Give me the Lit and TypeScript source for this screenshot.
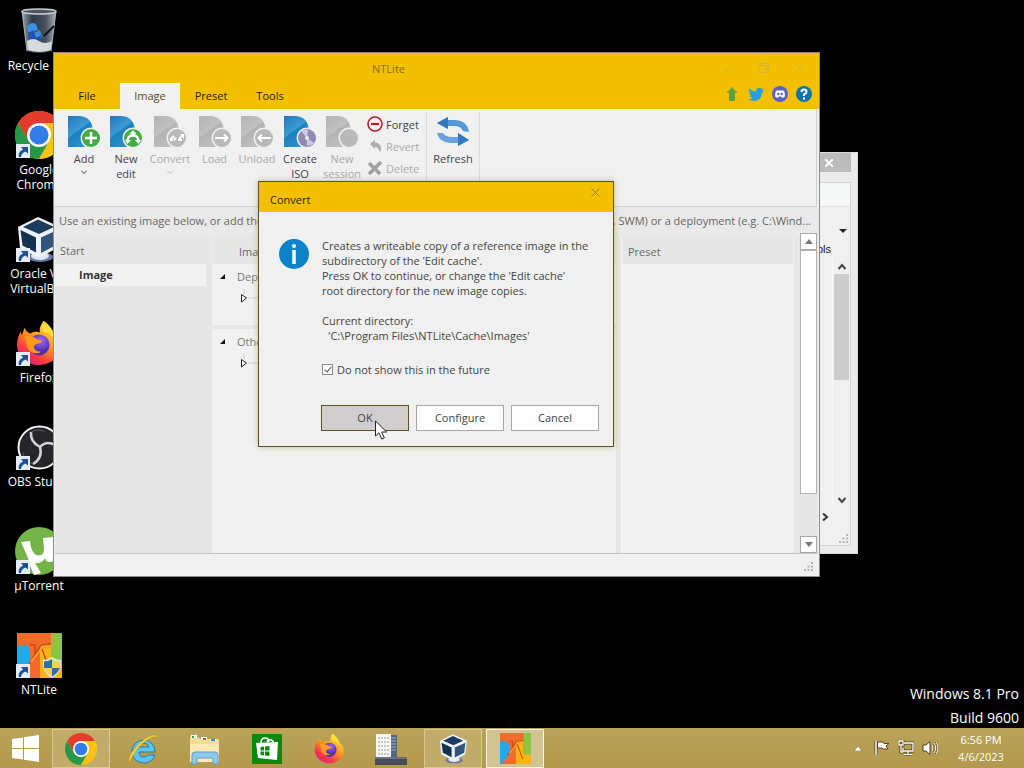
import { LitElement, html, svg, css, nothing, TemplateResult } from "lit";
import { customElement, state } from "lit/decorators.js";
import { classMap } from "lit/directives/class-map.js";

const chrome = (size: number) => html`<svg width=${size} height=${size} viewBox="0 0 48 48" aria-hidden="true">
  <circle cx="24" cy="24" r="24" fill="#fbc116"/>
  <path d="M3.2 12A24 24 0 0 1 44.8 12L24 13 13.6 30Z" fill="#e33b2e"/>
  <path d="M3.2 12A24 24 0 0 0 24 48L34.4 30 24 35 13.6 30Z" fill="#279847"/>
  <path d="M44.8 12A24 24 0 0 1 24 48L34.4 30 33 16 24 12Z" fill="#fbc116"/>
  <circle cx="24" cy="24" r="12" fill="#fff"/><circle cx="24" cy="24" r="9.5" fill="#2f7de9"/></svg>`;

const firefox = (size: number) => html`<svg width=${size} height=${size} viewBox="0 0 48 48" aria-hidden="true">
  <defs>
    <linearGradient id="ff1" x1="0.8" y1="0.1" x2="0.2" y2="1"><stop offset="0" stop-color="#ffe23a"/><stop offset="0.45" stop-color="#ff8a1d"/><stop offset="0.75" stop-color="#f8354a"/><stop offset="1" stop-color="#e31587"/></linearGradient>
    <radialGradient id="ff2" cx="0.6" cy="0.3"><stop offset="0" stop-color="#a06bf5"/><stop offset="1" stop-color="#4b2fb0"/></radialGradient>
  </defs>
  <path d="M29 1C36 6 39 11 40 16 43 17 46 22 46 28 46 39 36 47 24 47S1 38 1 26C1 20 3 15 5 12L6 16 9 8C10 11 12 13 15 14 19 12 22 12 25 13 24 9 26 4 29 1Z" fill="url(#ff1)"/>
  <circle cx="24" cy="26" r="11" fill="url(#ff2)"/>
  <path d="M9 17C14 16 19 17 22 20 25 21 27 21 27 22 26 25 21 24 19 27 18 30 21 33 26 33 20 37 11 33 11 25Z" fill="#ff9a1f"/>
  <path d="M29 1C36 8 40 13 40 20 38 16 35 14 31 13 27 11 26 6 29 1Z" fill="#ffdf3c"/></svg>`;

const vbox = (size: number) => html`<svg width=${size} height=${size} viewBox="0 0 48 48" aria-hidden="true">
  <ellipse cx="25" cy="42" rx="13" ry="5" fill="#6c74a2"/><ellipse cx="25" cy="41" rx="9" ry="4" fill="#dfe5f2"/>
  <path d="M23 2 45 12 42 33 24 43 5 33 3 12Z" fill="#eef3fa"/>
  <path d="M23 4.500 39 12 24 19 8 12Z" fill="#1d3b5d"/>
  <path d="M5.500 15 21 22.500 21 37.500 7.500 30.500Z" fill="#16304f"/>
  <path d="M42.500 15 26 22.500 26 38 40.500 30.500Z" fill="#31557d"/></svg>`;

const ntlite = (size: number, shield: boolean) => html`<svg width=${size} height=${size} viewBox="0 0 45 45" aria-hidden="true">
  <rect width="45" height="45" fill="#f26a2c"/><rect x="34" width="11" height="45" fill="#8cc444"/>
  <path d="M0 12H7Q13 12 13 20V31L3 45H0Z" fill="#22a9e6"/>
  <path d="M23 11H34V31H45V45H23Z" fill="#fbb512"/>
  <path d="M11 33 24 12 34 11 M13 12H18V26 M25 16 33 38" fill="none" stroke="#c94a12" stroke-width="1.500"/>
  <path d="M14 29 25 15 34 14" fill="none" stroke="#ff9a3a" stroke-width="2"/>
  ${shield ? svg`<path d="M35 24C38 26 41 27 44 27 45 36 41 42 35 45 29 42 25 36 26 27 29 27 32 26 35 24Z" fill="#dfe6ea"/>
    <path d="M35 26V35H27Q27 31 27 28.500 32 28 35 26Z M35 35H43Q41 40 35 43.500Z" fill="#2c6ea8"/>
    <path d="M35 26V35H43Q43.500 31 43 28.500 38 28 35 26Z M35 35H27Q29 40 35 43.500Z" fill="#f0d152"/>` : nothing}</svg>`;

const recycleBin = html`<svg width="36" height="46" viewBox="0 0 36 46" aria-hidden="true">
  <defs><linearGradient id="bin" x1="0" x2="1"><stop offset="0" stop-color="#9aa3aa"/><stop offset="0.3" stop-color="#2c3a4a"/><stop offset="0.7" stop-color="#48525e"/><stop offset="1" stop-color="#a8b0b6"/></linearGradient></defs>
  <path d="M1 3H35L30 43Q18 47 6 43Z" fill="url(#bin)"/><path d="M1 3 6 43" stroke="#aeb6bc"/><path d="M35 3 30 43" stroke="#aeb6bc"/>
  <path d="M6 19Q10 13 15 16L17 22 12 24 7 24ZM13 25 19 22 21 29 14 32Z" fill="#3d8ee0"/>
  <path d="M7 26 12 22 16 31 9 33ZM15 30 20 27 20 33Z" fill="#1e50b8"/><path d="M23 28 33 18" stroke="#0d141b" stroke-width="2"/>
  <path d="M6 33Q12 29 18 33T31 33L29.500 42Q18 46 6.500 42Z" fill="#d7dadc"/>
  <ellipse cx="18" cy="3.500" rx="17" ry="2.500" fill="#4d565f" stroke="#c6ccd1" stroke-width="1.500"/></svg>`;

const obs = html`<svg width="45" height="45" viewBox="0 0 45 45" aria-hidden="true">
  <circle cx="22.500" cy="22.500" r="21" fill="#26252a" stroke="#f1f1f1" stroke-width="2"/>
  <g fill="none" stroke="#d3d1d6" stroke-width="2.500">
    <path d="M23 22Q13 17 14 7"/><path d="M23 22Q29 15 38 20"/><path d="M23 22Q26 33 16 39"/></g>
  <g fill="none" stroke="#5b585f"><path d="M14 7Q22 3 28 7"/><path d="M38 20Q41 28 36 34"/><path d="M16 39Q8 36 6 28"/></g></svg>`;

const utorrent = html`<svg width="48" height="48" viewBox="0 0 48 48" aria-hidden="true">
  <circle cx="24" cy="24" r="24" fill="#73b348"/>
  <path d="M6 15 15 14Q16 25 21 28 29 30 29 22L28 11 38 10Q37 21 42 26L44 30Q40 35 34 35 31 35 30 31 27 37 20 36L26 46 19 48Q15 40 13 31Z" fill="#fff"/></svg>`;

const shortcut = html`<svg class="shortcut" width="14" height="14" viewBox="0 0 14 14" aria-hidden="true">
  <rect width="14" height="14" fill="#e3ecf6"/><path d="M3 13Q1.500 8 7 5.500L5 3H12V9.500L9.500 7.500Q5 9 5 13Z" fill="#1f4f96"/></svg>`;

type Badge = "plus" | "tree" | "link" | "right" | "left" | "disc" | "blank";
const badges: Record<Badge, TemplateResult> = {
  plus: svg`<path d="M23 17V29M17 23H29" stroke="#fff" stroke-width="2.500"/>`,
  tree: svg`<path d="M23 17V22M23 20Q17.500 21 17.500 26M23 20Q28.500 21 28.500 26" fill="none" stroke="#fff" stroke-width="2.500"/><path d="M19.500 19 23 15 26.500 19ZM15 25H21L17.500 29ZM25 25H31L28.500 29Z" fill="#fff"/>`,
  link: svg`<path d="M17 24 20 21M20 25 22 23M25 24 29 20M24 25 28 25" stroke="#fff" stroke-width="2"/><path d="M16 22V26H20ZM30 24V19H26Z" fill="#fff"/>`,
  right: svg`<path d="M16 23H28M25 19.500 28.500 23 25 26.500" fill="none" stroke="#fff" stroke-width="2"/>`,
  left: svg`<path d="M30 23H18M21 19.500 17.500 23 21 26.500" fill="none" stroke="#fff" stroke-width="2"/>`,
  disc: svg`<path d="M23 23 17 16Q20 14 24 15ZM23 23 30 28Q27 31 23 31Z" fill="#cfc9e8"/><circle cx="23" cy="23" r="2" fill="#eee"/>`,
  blank: svg``,
};
const discIcon = (badge: Badge, enabled: boolean) => {
  const fill = badge === "disc" ? "#8e8ab2" : enabled ? "#43ad43" : "#b9b9b9";
  const tones = enabled ? ["#2378bb", "#3b9bd3", "#1c80bf", "#2a94cf"] : ["#b4b4b4", "#c0c0c0", "#b4b4b4", "#c0c0c0"];
  const id = enabled ? "tone-on" : "tone-off";
  return html`<svg width="32" height="32" viewBox="0 0 32 32" aria-hidden="true">
    <defs><linearGradient id=${id} x1="0" y1="0" x2="0.6" y2="1"><stop offset="0" stop-color=${tones[0]}/><stop offset="0.5" stop-color=${tones[1]}/><stop offset="0.55" stop-color=${tones[2]}/><stop offset="1" stop-color=${tones[3]}/></linearGradient></defs>
    <path d="M0 1H12Q25 2 25 18V32H0Z" fill="url(#${id})"/>
    <circle cx="23" cy="23" r="10.500" fill="#efefef"/><circle cx="23" cy="23" r="9" fill=${fill}/>${badges[badge]}</svg>`;
};

const forgetIcon = html`<svg width="16" height="16" viewBox="0 0 16 16" aria-hidden="true"><circle cx="8" cy="8" r="7" fill="#fbf4f4" stroke="#bd1a26" stroke-width="1.600"/><path d="M4 8H12" stroke="#bd1a26" stroke-width="2.200"/></svg>`;
const revertIcon = html`<svg width="16" height="16" viewBox="0 0 16 16" aria-hidden="true"><path d="M3 6 8 2V4.500Q14 5 14 11L13 15Q12 9 8 9V11Z" fill="#adadad"/></svg>`;
const deleteIcon = html`<svg width="16" height="16" viewBox="0 0 16 16" aria-hidden="true"><path d="M2 3 13 14M14 2 2 14" stroke="#a2a2a2" stroke-width="3.500"/></svg>`;
const refreshIcon = html`<svg width="34" height="32" viewBox="0 0 34 32" aria-hidden="true">
  <path d="M1 8 12 2V5H18Q31 5 33 17L27 16Q25 11 18 11H12V14Z" fill="#5597d8"/><path d="M1 8 12 2V14Z" fill="#3279be"/>
  <path d="M33 25 22 31V28H14Q3 27 1 18L7 18Q9 22 16 22H22V18Z" fill="#66a3df"/><path d="M33 25 22 18V31Z" fill="#3279be"/></svg>`;

const grip = html`<svg width="9" height="9" viewBox="0 0 9 9" aria-hidden="true"><path d="M0 7h2v2H0zM3.500 7h2v2h-2zM7 7h2v2H7zM3.500 3.500h2v2h-2zM7 3.500h2v2H7zM7 0h2v2H7z" fill="#b5b5b5"/></svg>`;

interface RibbonItem { label: string; lines: string[]; badge: Badge; enabled: boolean; menu?: boolean; }
const ribbon: RibbonItem[] = [
  { label: "Add", lines: ["Add"], badge: "plus", enabled: true, menu: true },
  { label: "New edit", lines: ["New", "edit"], badge: "tree", enabled: true },
  { label: "Convert", lines: ["Convert"], badge: "link", enabled: false, menu: true },
  { label: "Load", lines: ["Load"], badge: "right", enabled: false },
  { label: "Unload", lines: ["Unload"], badge: "left", enabled: false },
  { label: "Create ISO", lines: ["Create", "ISO"], badge: "disc", enabled: true },
  { label: "New session", lines: ["New", "session"], badge: "blank", enabled: false },
];

const base = css`
  * { box-sizing: border-box; }
  svg { display: block; flex: none; }
  button { font: inherit; color: inherit; background: none; border: 0; padding: 0; margin: 0; }
`;

@customElement("desktop-icons")
class DesktopIcons extends LitElement {
  static styles = [base, css`
    :host { display: flex; flex-direction: column; align-items: flex-start; padding-top: 4px; color: #fff; font-size: 12px; line-height: 15px; }
    .item { display: flex; flex-direction: column; align-items: center; width: 78px; height: 104px; text-align: center; color: inherit; text-decoration: none; }
    .pic { position: relative; display: grid; place-items: center; width: 48px; height: 54px; }
    .shortcut { position: absolute; left: 1px; bottom: 4px; }
    .caption { white-space: pre; text-shadow: 0 1px 2px #000; }
  `];
  render() {
    const items: [string, TemplateResult, boolean][] = [
      ["Recycle Bin", recycleBin, false], ["Google\nChrome", chrome(48), true], ["Oracle VM\nVirtualBox", vbox(48), true],
      ["Firefox", firefox(46), true], ["OBS Studio", obs, true], ["µTorrent", utorrent, true], ["NTLite", ntlite(45, true), true],
    ];
    return items.map(([name, pic, link]) => html`<a class="item" href="#"><span class="pic">${pic}${link ? shortcut : nothing}</span><span class="caption">${name}</span></a>`);
  }
}

@customElement("back-window")
class BackWindow extends LitElement {
  static styles = [base, css`
    :host { display: flex; flex-direction: column; padding: 0 6px 7px; background: #ebebeb; border: 1px solid #dcdcdc; color: #111; font: 11px/14px "Liberation Sans", sans-serif; }
    .bar { display: flex; justify-content: flex-end; height: 29px; }
    .close { display: grid; place-items: center; width: 44px; height: 19px; background: #bcbcbc; }
    .body { flex: 1; display: flex; flex-direction: column; background: #f0f0f0; border: 1px solid #d4d4d4; border-left: 0; }
    .top { height: 24px; background: #f5f7f7; border-bottom: 1px solid #e2e4e4; }
    .drop { display: flex; justify-content: flex-end; padding: 22px 3px 9px 0; }
    .tools { padding-right: 19px; text-align: right; }
    .scroll { align-self: flex-end; display: flex; flex-direction: column; align-items: center; flex: 1; width: 18px; padding-top: 7px; background: #f0f0f0; border-left: 1px solid #fafafa; }
    .thumb { width: 15px; height: 106px; margin-top: 4px; background: #cdcdcd; }
    .end { margin-top: auto; }
    .next { display: flex; justify-content: flex-end; padding: 9px 21px 13px 0; }
    .grip { display: flex; justify-content: flex-end; padding: 0 2px 2px; }
  `];
  render() {
    return html`
      <div class="bar"><button class="close" aria-label="Close"><svg width="8" height="8" viewBox="0 0 8 8"><path d="M0 0 8 8M8 0 0 8" stroke="#fff" stroke-width="2"/></svg></button></div>
      <div class="body"><div class="top"></div>
        <div class="drop"><svg width="8" height="4" viewBox="0 0 8 4"><path d="M0 0H8L4 4Z" fill="#222"/></svg></div>
        <div class="tools">Tools</div>
        <div class="scroll">
          <svg width="8" height="7" viewBox="0 0 8 7"><path d="M0.500 6 4 2 7.500 6" fill="none" stroke="#444" stroke-width="2"/></svg>
          <div class="thumb"></div>
          <svg class="end" width="8" height="7" viewBox="0 0 8 7"><path d="M0.500 1 4 5 7.500 1" fill="none" stroke="#444" stroke-width="2"/></svg>
        </div>
        <div class="next"><svg width="7" height="8" viewBox="0 0 7 8"><path d="M1 0.500 5 4 1 7.500" fill="none" stroke="#333" stroke-width="2"/></svg></div>
        <div class="grip">${grip}</div>
      </div>`;
  }
}

@customElement("main-window")
class MainWindow extends LitElement {
  @state() tab = "Image";
  static styles = [base, css`
    :host { display: flex; flex-direction: column; background: #f0f0f0; border: 1px solid #8f8c82; color: #444; font-size: 11px; line-height: 15px; }
    .title { display: grid; grid-template-columns: 1fr auto 1fr; align-items: center; height: 30px; background: #f2c000; color: #8a6d1c; }
    .name { grid-column: 2; margin-right: 96px; }
    .controls { display: flex; justify-content: flex-end; gap: 26px; padding-right: 15px; }
    .tabs { display: flex; justify-content: space-between; height: 26px; background: #f2c000; color: #2b2200; }
    .tablist { display: grid; grid-template-columns: 66px 60px 62px 56px; }
    .tab { padding-bottom: 2px; }
    .tab.on { background: #f1f1f1; color: #5a4a20; }
    .links { display: flex; align-items: center; gap: 8px; padding: 0 7px 4px 0; }
    .ribbon { display: flex; height: 98px; padding: 3px 0 0 9px; margin: 0 2px 0 0; border: solid #d2d2d2; border-width: 0 1px 1px 0; }
    .big { display: grid; grid-template-columns: 42px 42px 46px 43px 42px 44px 40px; }
    .cmd { display: flex; flex-direction: column; align-items: center; padding-top: 3px; }
    .cmd svg + .text { margin-top: 4px; }
    .cmd:disabled, .row:disabled { color: #aaa; }
    .arrow { margin-top: 4px; }
    .rows { display: flex; flex-direction: column; width: 65px; padding: 1px 0 0 5px; border-right: 1px solid #dadada; }
    .row { display: flex; align-items: center; gap: 3px; height: 22px; }
    .refresh { width: 53px; border-right: 1px solid #dadada; }
    .hint { display: flex; justify-content: space-between; gap: 8px; padding: 6px 8px 9px 5px; background: #e9e9e9; color: #666; white-space: nowrap; overflow: hidden; }
    .panes { flex: 1; display: grid; grid-template-columns: 157px minmax(0, 1fr) 179px 18px; background: #e6e6e6; border-bottom: 1px solid #c4c4c4; margin: 0 1px; color: #777; }
    .start { padding: 6px 6px 0 0; }
    .start .head { padding-left: 5px; color: #666; }
    .item { display: block; width: 100%; height: 22px; margin-top: 6px; padding: 0 0 2px 24px; text-align: left; background: #f2f2f2; color: #333; font-weight: 700; }
    .list { border-left: 1px solid #efefef; margin-right: 5px; display: flex; flex-direction: column; }
    .head2 { height: 27px; padding: 7px 0 0 26px; background: #e6e6e6; color: #666; }
    .group { height: 61px; margin-bottom: 4px; background: #f1f1f1; }
    .group:last-child { flex: 1; margin: 0; }
    .line { display: flex; align-items: center; gap: 11px; padding: 2px 0 0 6px; height: 22px; }
    .node { display: flex; align-items: center; padding: 2px 0 0 28px; height: 22px; }
    .preset { background: #f1f1f1; margin-right: 6px; border-left: 1px solid #f6f6f6; }
    .preset .head2 { padding-left: 6px; margin-right: 1px; }
    .scroll { display: flex; flex-direction: column; width: 17px; margin-top: -4px; }
    .btn { display: grid; place-items: center; height: 17px; border: 1px solid #a8a8a8; background: #fff; }
    .thumb { height: 244px; border: 1px solid #b4b4b4; background: #fff; }
    .scroll .btn:last-child { margin-top: auto; }
    .status { display: flex; justify-content: flex-end; align-items: flex-end; height: 22px; padding: 0 6px 5px; }
  `];
  render() {
    const arrow = (c: string) => html`<svg class="arrow" width="6" height="4" viewBox="0 0 6 4"><path d="M0 0.500 3 3.500 6 0.500" fill="none" stroke=${c}/></svg>`;
    const group = (name: string) => html`<div class="group"><div class="line"><svg width="7" height="7" viewBox="0 0 7 7"><path d="M6 1V6H1Z" fill="#111"/></svg>${name}</div>
      <div class="node"><svg width="20" height="18" viewBox="0 0 20 18"><path d="M3 0V5M7 9H20" stroke="#ccc"/><path d="M0.500 5.500 5.500 9 0.500 13Z" fill="#fff" stroke="#222"/></svg></div></div>`;
    return html`
      <div class="title"><span class="name">NTLite</span><span class="controls">
        <button aria-label="Minimize"><svg width="9" height="9" viewBox="0 0 9 9"><path d="M1 6.500H8" stroke="#d3b045" fill="none"/></svg></button>
        <button aria-label="Maximize"><svg width="11" height="10" viewBox="0 0 11 10"><path d="M0.500 2.500H8.500V9.500H0.500ZM3 2V0.500H10.500V7H9" stroke="#d3ae3c" fill="none"/></svg></button>
        <button aria-label="Close"><svg width="9" height="9" viewBox="0 0 9 9"><path d="M1 1 8 8M8 1 1 8" stroke="#d3b045" fill="none"/></svg></button></span></div>
      <div class="tabs"><div class="tablist" role="tablist">${["File", "Image", "Preset", "Tools"].map(t => html`<button role="tab" class=${classMap({ tab: true, on: t === this.tab })} @click=${() => (this.tab = t)}>${t}</button>`)}</div>
        <div class="links">
          <a href="#" aria-label="Update"><svg width="16" height="16" viewBox="0 0 16 16"><path d="M8 1 14 7H11V15H5V7H2Z" fill="#7aa832"/><path d="M8 1 11 7V15H5V7Z" fill="#5fa03c"/></svg></a>
          <a href="#" aria-label="Twitter"><svg width="16" height="16" viewBox="0 0 16 16"><path d="M1 2Q4 5.500 8 5.500 8 2 11 2 13 2 14 3L15.500 2.500 14.500 5 16 5Q15 6.500 14 7 13 15 6 15 3 15 0 13 3 13.500 5 12 2.500 12 2 9.500H3.500Q1 8.500 1 6L2 6.500Q0 4.500 1 2Z" fill="#25a0e2"/></svg></a>
          <a href="#" aria-label="Discord"><svg width="16" height="16" viewBox="0 0 16 16"><circle cx="8" cy="8" r="8" fill="#5b5fd0"/><path d="M4 5Q6 4 6.500 4.500H9.500Q10 4 12 5 13 7 13 10.500 11.500 12 10 11.500L9 10.500H7L6 11.500Q4.500 12 3 10.500 3 7 4 5Z" fill="#fff"/><circle cx="6.300" cy="8" r="1.200" fill="#5b5fd0"/><circle cx="9.700" cy="8" r="1.200" fill="#5b5fd0"/></svg></a>
          <a href="#" aria-label="Help"><svg width="16" height="16" viewBox="0 0 16 16"><circle cx="8" cy="8" r="8" fill="#0d76a6"/><path d="M5.500 6Q5.500 3.500 8 3.500T10.500 5.800Q10.500 7.500 8 8.500V10" fill="none" stroke="#fff" stroke-width="2"/><rect x="7" y="11.500" width="2" height="2" fill="#fff"/></svg></a>
        </div></div>
      <div class="ribbon">
        <div class="big">${ribbon.map(r => html`<button class="cmd" aria-label=${r.label} ?disabled=${!r.enabled}>${discIcon(r.badge, r.enabled)}<span class="text">${r.lines.map((l, i) => html`${i ? html`<br>` : nothing}${l}`)}</span>${r.menu ? arrow(r.enabled ? "#444" : "#bbb") : nothing}</button>`)}</div>
        <div class="rows"><button class="row">${forgetIcon}Forget</button><button class="row" disabled>${revertIcon}Revert</button><button class="row" disabled>${deleteIcon}Delete</button></div>
        <button class="cmd refresh">${refreshIcon}<span class="text">Refresh</span></button>
      </div>
      <div class="hint"><span>Use an existing image below, or add the</span><span>image (WIM, ESD, SWM) or a deployment (e.g. C:\\Wind...</span></div>
      <div class="panes">
        <div class="start"><div class="head">Start</div><button class="item">Image</button></div>
        <div class="list"><div class="head2">Image</div>${group("Deployed")}${group("Other")}</div>
        <div class="preset"><div class="head2">Preset</div></div>
        <div class="scroll"><div class="btn"><svg width="8" height="5" viewBox="0 0 8 5"><path d="M0 5H8L4 0Z" fill="#777"/></svg></div><div class="thumb"></div><div class="btn"><svg width="8" height="5" viewBox="0 0 8 5"><path d="M0 0H8L4 5Z" fill="#777"/></svg></div></div>
      </div>
      <div class="status">${grip}</div>`;
  }
}

@customElement("convert-dialog")
class ConvertDialog extends LitElement {
  static styles = [base, css`
    :host { display: block; background: #f0f0f0; border: 1px solid #5a5222; box-shadow: 0 0 6px #a8993c99; color: #444; font-size: 11px; line-height: 15px; }
    .title { display: flex; justify-content: space-between; height: 30px; padding: 10px 13px 0 11px; background: #f2c000; color: #2e2400; }
    .x { align-self: flex-start; margin-top: -4px; }
    .body { display: grid; grid-template-columns: 30px 1fr; gap: 13px; padding: 26px 14px 0 20px; }
    .info { margin-top: 1px; }
    .msg { margin: 0; white-space: pre; }
    .indent { padding-left: 6px; }
    .check { display: flex; align-items: center; gap: 4px; margin-top: 18px; height: 16px; }
    input { appearance: none; position: relative; width: 11px; height: 11px; margin: 0; border: 1px solid #8a8a8a; background: #fff; }
    input:checked::after { content: ""; position: absolute; left: 3px; top: 0; width: 3px; height: 6px; border: solid #555; border-width: 0 1px 1px 0; transform: rotate(40deg); }
    .buttons { display: grid; grid-template-columns: repeat(3, 88px); justify-content: end; gap: 7px; padding: 28px 14px 15px 0; }
    .buttons button { height: 26px; padding-bottom: 2px; border: 1px solid #a6a6a6; background: #fdfdfd; }
    .buttons .ok { background: #cfcdce; border-color: #5a5222; }
  `];
  render() {
    return html`
      <div class="title"><span>Convert</span><button class="x" aria-label="Close"><svg width="9" height="9" viewBox="0 0 9 9"><path d="M0.500 0.500 8.500 8.500M8.500 0.500 0.500 8.500" stroke="#a07d12"/></svg></button></div>
      <div class="body">
        <svg class="info" width="30" height="30" viewBox="0 0 30 30" aria-hidden="true"><circle cx="15" cy="15" r="15" fill="#0a84c6"/><circle cx="15" cy="7" r="2" fill="#fff"/><path d="M15 11V25" stroke="#fff" stroke-width="3.500"/></svg>
        <div>
          <p class="msg">Creates a writeable copy of a reference image in the
subdirectory of the 'Edit cache'.
Press OK to continue, or change the 'Edit cache'
root directory for the new image copies.

Current directory:</p><p class="msg indent">'C:\\Program Files\\NTLite\\Cache\\Images'</p>
          <div class="check"><input type="checkbox" id="again" checked><label for="again">Do not show this in the future</label></div>
        </div>
      </div>
      <div class="buttons"><button class="ok">OK</button><button>Configure</button><button>Cancel</button></div>`;
  }
}

@customElement("task-bar")
class TaskBar extends LitElement {
  static styles = [base, css`
    :host { display: flex; flex: none; align-items: stretch; height: 40px; background: linear-gradient(#b9a25a, #b3994d); color: #fff; font-size: 11px; line-height: 17px; }
    .start { display: grid; place-items: center; width: 52px; padding-right: 2px; }
    .apps { display: grid; grid-auto-flow: column; grid-auto-columns: 58px; gap: 4px; padding-top: 1px; }
    .app { display: grid; place-items: center; border: 1px solid transparent; }
    .open { background: #c0ab69; border-color: #d8ca98; }
    .active { background: #d2c492; border-color: #fbf6e2; }
    .tray { display: flex; align-items: center; gap: 8px; margin-left: auto; padding-right: 8px; }
    .more { margin-right: 4px; }
    .clock { width: 70px; text-align: center; }
  `];
  render() {
    const ie = html`<svg width="34" height="34" viewBox="0 0 34 34"><path d="M6 19A11.500 11.500 0 1 1 29 20H13Q13 25 18 25 21 25 22 23H29Q26 31 18 31 6 30 6 19ZM13 15H23Q22 11 18 11T13 15Z" fill="#5cc5ee" stroke="#1b7fb4"/><path d="M4 31Q0 27 9 16 18 5 27 3 32 2 31 6 29 3 23 7 14 12 8 22 3 30 4 31Z" fill="#f4cf35" stroke="#b9921d" stroke-width="0.500"/></svg>`;
    const explorer = html`<svg width="34" height="32" viewBox="0 0 34 32"><path d="M2 4H10L12 6H31V29H2Z" fill="#f3dc93"/><path d="M3 2h6v3H3zM13 4h6v3h-6zM22 6h6v2h-6z" fill="#fff"/><path d="M4 3h2v2H4z" fill="#2fa84c"/><path d="M15 5h3v2h-3z" fill="#d4483a"/><path d="M23 6h4v2h-4z" fill="#3a8cc9"/><path d="M2 11H31V29H2Z" fill="#f9e9b4"/><path d="M4 31V22Q4 19 7 19H27Q30 19 30 22V31H25V25H9V31Z" fill="#90c8ea" stroke="#5a9fca"/></svg>`;
    const store = html`<svg width="30" height="30" viewBox="0 0 30 30"><rect width="30" height="30" fill="#0c8a0f"/><path d="M4 9 26 8 25 26 6 24Z" fill="#fff"/><path d="M9 9Q9 4 13 4T17 8M15 8Q16 5 19 6T21 9" fill="none" stroke="#fff" stroke-width="1.500"/><path d="M8.500 13 12 12.500V16.500H8.500ZM13 12.500 17.500 12V16.500H13ZM8.500 17.500H12V21.500L8.500 21ZM13 17.500H17.500V22L13 21.500Z" fill="#0c8a0f"/></svg>`;
    const server = html`<svg width="32" height="32" viewBox="0 0 32 32"><path d="M15 2H22V24H15Z" fill="#53667e"/><path d="M16 5h5M16 8h5M16 11h5M16 14h5M16 17h5" stroke="#9fb0c4"/><rect x="1" y="1" width="15" height="23" fill="#f4f4f2"/><path d="M3 5H14M3 9H14M3 13H14M3 17H14M3 21H14" stroke="#9a9a9a" stroke-dasharray="2 1"/><rect y="24" width="32" height="8" fill="#474c58"/><rect y="24" width="32" height="2" fill="#6a707c"/></svg>`;
    const apps: [string, TemplateResult, string][] = [
      ["Chrome", chrome(32), "open"], ["Internet Explorer", ie, ""], ["File Explorer", explorer, ""], ["Store", store, ""],
      ["Firefox", firefox(31), ""], ["Server Manager", server, ""], ["VirtualBox", vbox(31), "open"], ["NTLite", ntlite(31, false), "active"],
    ];
    return html`
      <button class="start" aria-label="Start"><svg width="28" height="27" viewBox="0 0 28 27"><path d="M1 4 12 2.500V13H1ZM13 2.300 28 0V13H13ZM1 14H12V24.500L1 23ZM13 14H28V27L13 24.700Z" fill="#fff"/></svg></button>
      <div class="apps">${apps.map(([n, i, s]) => html`<button class="app ${s}" aria-label=${n}>${i}</button>`)}</div>
      <div class="tray">
        <svg class="more" width="8" height="5" viewBox="0 0 8 5"><path d="M0 5 4 0 8 5Z" fill="#fff" stroke="#6d5c26" stroke-width="0.500"/></svg>
        <svg width="16" height="16" viewBox="0 0 16 16"><path d="M2 1V15" stroke="#4e431d" stroke-width="3"/><path d="M3.500 2H9L10 3.500H15L12 6 14 9H9L8 8H3.500Z" fill="#fff" stroke="#4e431d"/><path d="M2 1V15" stroke="#fff" stroke-width="1.500"/></svg>
        <svg width="16" height="16" viewBox="0 0 16 16"><path d="M6 3H15V11H5V8M10 11V14M6 14.500H14M3 6V12H5M1 1H5V5H1Z" fill="none" stroke="#4e431d" stroke-width="3"/><path d="M6 3H15V11H5V8M10 11V14M6 14.500H14M3 6V12H5M1 1H5V5H1Z" fill="none" stroke="#fff" stroke-width="1.300"/></svg>
        <svg width="16" height="16" viewBox="0 0 16 16"><path d="M10 5Q12 8 10 11M12 3Q15.500 8 12 13M14 1.500Q18 8 14 14.500" fill="none" stroke="#6d5c26" stroke-width="2"/><path d="M1 5H4L8 1.500V14.500L4 11H1Z" fill="#fff" stroke="#4e431d"/><path d="M10 5Q12 8 10 11M12 3Q15.500 8 12 13M14 1.500Q18 8 14 14.500" fill="none" stroke="#fff"/></svg>
        <div class="clock">6:56 PM<br>4/6/2023</div>
      </div>`;
  }
}

@customElement("app-root")
class AppRoot extends LitElement {
  static styles = [base, css`
    :host { display: flex; flex-direction: column; height: 100vh; background: #000; font-family: "Open Sans", "Noto Sans", sans-serif; }
    .desk { position: relative; flex: 1; min-height: 0; overflow: hidden; }
    .back { position: absolute; left: 640px; top: 152px; width: 218px; height: 402px; }
    .main { position: absolute; left: 53px; top: 52px; width: 767px; height: 525px; }
    .dialog { position: absolute; left: 258px; top: 181px; width: 356px; }
    .cursor { position: absolute; left: 375px; top: 420px; }
    .mark { position: absolute; right: 5px; bottom: -2px; color: #fff; font-size: 14px; line-height: 24px; text-align: right; }
  `];
  render() {
    return html`
      <div class="desk">
        <desktop-icons></desktop-icons>
        <div class="mark">Windows 8.1 Pro<br>Build 9600</div>
        <back-window class="back"></back-window>
        <main-window class="main"></main-window>
        <convert-dialog class="dialog" role="dialog" aria-label="Convert"></convert-dialog>
        <svg class="cursor" width="13" height="20" viewBox="0 0 13 20" aria-hidden="true"><path d="M0.500 1V16L4 12.800 6.700 19 9.300 18 6.700 12H11.700Z" fill="#fff" stroke="#222"/></svg>
      </div>
      <task-bar></task-bar>`;
  }
}
